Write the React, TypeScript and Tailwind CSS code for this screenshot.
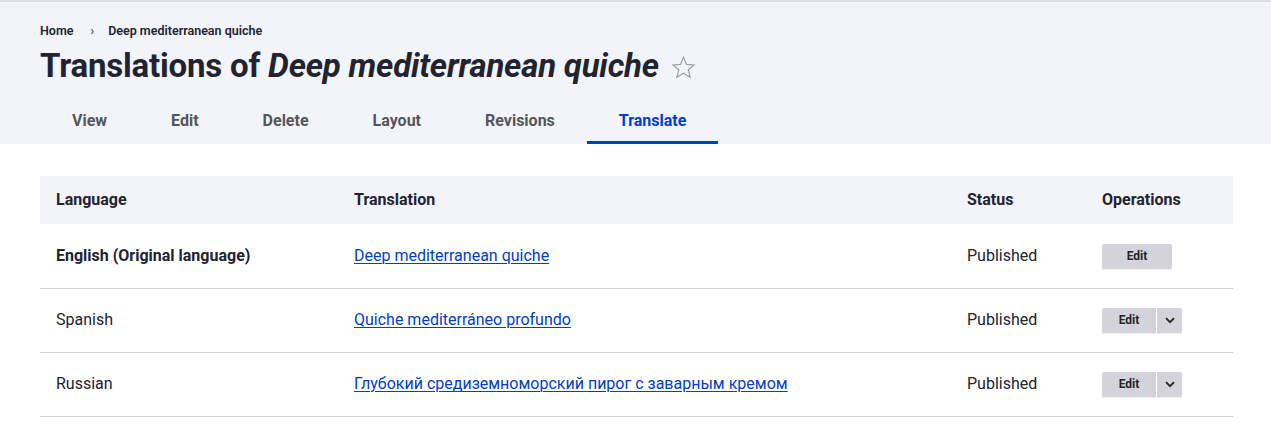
import React from 'react';

type Row = {
  language: string;
  original?: boolean;
  title: string;
  status: string;
};

const tabs = ['View', 'Edit', 'Delete', 'Layout', 'Revisions', 'Translate'];

const rows: Row[] = [
  { language: 'English (Original language)', original: true, title: 'Deep mediterranean quiche', status: 'Published' },
  { language: 'Spanish', title: 'Quiche mediterráneo profundo', status: 'Published' },
  { language: 'Russian', title: 'Глубокий средиземноморский пирог с заварным кремом', status: 'Published' },
];

function Star() {
  return (
    <svg width="25" height="25" viewBox="0 0 24 24" className="ml-3 mt-1">
      <polygon
        points="12,2.2 14.9,9 22.2,9.5 16.6,14.2 18.4,21.4 12,17.5 5.6,21.4 7.4,14.2 1.8,9.5 9.1,9"
        fill="none"
        stroke="#9a9ca4"
        strokeWidth="1.1"
        strokeLinejoin="miter"
      />
    </svg>
  );
}

function Chevron() {
  return (
    <svg width="10" height="7" viewBox="0 0 10 7">
      <path d="M1 1.2 L5 5.2 L9 1.2" fill="none" stroke="#232429" strokeWidth="1.8" />
    </svg>
  );
}

function EditButton({ split }: { split: boolean }) {
  if (!split) {
    return (
      <button className="h-[25px] w-[70px] rounded-[2px] bg-[#d3d4d9] text-[12px] font-bold text-[#232429] shadow-[0_1px_1px_rgba(0,0,0,0.08)]">
        Edit
      </button>
    );
  }
  return (
    <div className="flex h-[25px] w-[80px] overflow-hidden rounded-[2px] bg-[#d3d4d9] shadow-[0_1px_1px_rgba(0,0,0,0.08)]">
      <button className="w-[54px] text-[12px] font-bold text-[#232429]">Edit</button>
      <div className="w-px bg-white" />
      <button className="flex flex-1 items-center justify-center">
        <Chevron />
      </button>
    </div>
  );
}

export default function App() {
  return (
    <div className="min-h-screen bg-white text-[#222330]" style={{ fontFamily: 'Roboto, "Noto Sans", sans-serif' }}>
      <header className="border-t-2 border-[#dcdde2] bg-[#f3f4f9] pl-10 pr-[38px] pt-[19px]">
        <nav className="flex h-5 items-center text-[12.5px] font-semibold text-[#222330]">
          <span>Home</span>
          <span className="ml-[17px] mr-[14px] text-[12px] font-normal">›</span>
          <span>Deep mediterranean quiche</span>
        </nav>
        <div className="flex h-12 items-center">
          <h1 className="text-[33px] font-bold leading-none tracking-[-0.2px] text-[#222330]">
            Translations of <em className="italic">Deep mediterranean quiche</em>
          </h1>
          <Star />
        </div>
        <ul className="mt-[7px] flex h-12">
          {tabs.map((tab) => {
            const active = tab === 'Translate';
            return (
              <li
                key={tab}
                className={
                  active
                    ? 'flex items-center border-b-[3px] border-[#003ecc] px-8 pt-[5px] text-[16px] font-bold text-[#003ecc]'
                    : 'flex items-center border-b-[3px] border-transparent px-8 pt-[5px] text-[16px] font-bold text-[#55565b]'
                }
              >
                {tab}
              </li>
            );
          })}
        </ul>
      </header>

      <div className="pl-10 pr-[38px] pt-8">
        <table className="w-full border-collapse text-left text-[16px]">
          <thead>
            <tr className="h-12 bg-[#f3f4f9]">
              <th className="w-[298px] px-4 font-bold">Language</th>
              <th className="w-[613px] px-4 font-bold">Translation</th>
              <th className="w-[135px] px-4 font-bold">Status</th>
              <th className="px-4 font-bold">Operations</th>
            </tr>
          </thead>
          <tbody>
            {rows.map((row, i) => (
              <tr key={row.language} className="h-16 border-b border-[#d3d4d9]">
                <td className={row.original ? 'px-4 font-bold' : 'px-4'}>{row.language}</td>
                <td className="px-4">
                  <a href="#" className="text-[#003ecc] underline decoration-1 underline-offset-2">
                    {row.title}
                  </a>
                </td>
                <td className="px-4">{row.status}</td>
                <td className="px-4">
                  <EditButton split={i > 0} />
                </td>
              </tr>
            ))}
          </tbody>
        </table>
      </div>
    </div>
  );
}
